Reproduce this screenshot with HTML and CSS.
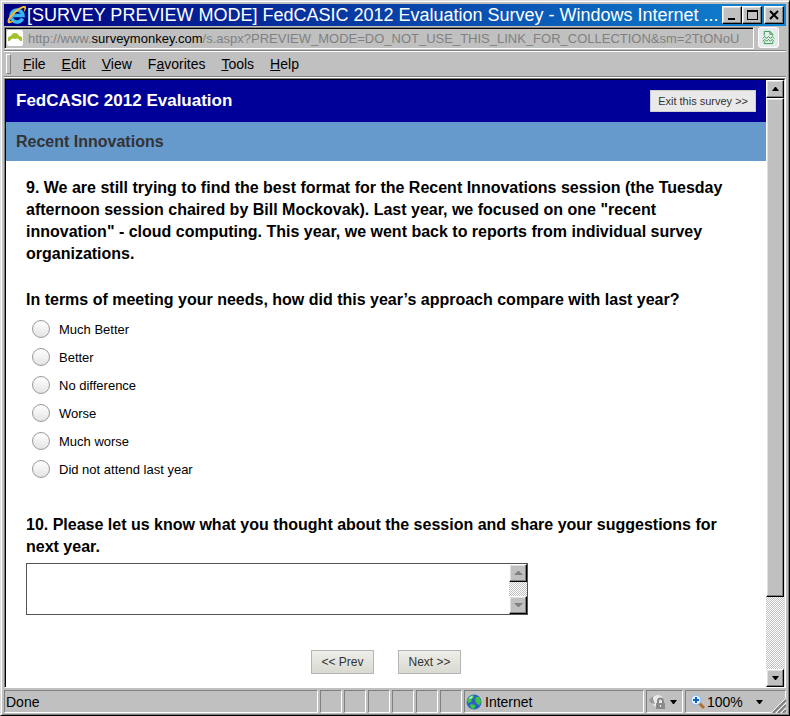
FILE: index.html
```html
<!DOCTYPE html>
<html lang="en">

<head>
    <meta charset="UTF-8">
    <meta name="viewport" content="width=device-width, initial-scale=1.0">
    <title>FedCASIC 2012 Evaluation Survey</title>
    <link rel="stylesheet" href="styles.css">
</head>

<body>
    <div class="window">
        <header class="title-bar">
            <svg class="ie-icon" viewBox="0 0 20 20" aria-hidden="true">
                <path d="M15.500 13.500A6 6 0 1 1 16 10.500H6" fill="none" stroke="#35b5f2" stroke-width="3.500" />
                <path d="M1 18C-2 13 12 0 18 1c2 1 1 4-1 6 0-2 1-4 0-4C12 3 1 15 3 16c2 1 4-1 5-1-2 2-5 4-7 3z"
                    fill="#f5bd2c" />
            </svg>
            <h1 class="window-title">[SURVEY PREVIEW MODE] FedCASIC 2012 Evaluation Survey - Windows Internet ...</h1>
            <div class="window-buttons">
                <button type="button" class="window-button" aria-label="Minimize">
                    <svg viewBox="0 0 12 12"><path d="M2 9h7v2H2z" /></svg>
                </button>
                <button type="button" class="window-button" aria-label="Maximize">
                    <svg viewBox="0 0 12 12"><path d="M1 1h11v10H1zM2 3v7h9V3z" fill-rule="evenodd" /></svg>
                </button>
                <button type="button" class="window-button close-button" aria-label="Close">
                    <svg viewBox="0 0 12 12"><path d="M2 2l8 8M10 2l-8 8" stroke="#000" stroke-width="2" /></svg>
                </button>
            </div>
        </header>

        <div class="address-bar">
            <div class="address-field">
                <svg class="site-icon" viewBox="0 0 16 16" aria-hidden="true">
                    <rect width="16" height="16" rx="2" fill="#fff" />
                    <path d="M1 11V8c0-1 1-2 3-2 1-4 7-4 8 0 2 0 3 1 3 2v3h-2c0-1-1-2-2-2-1-1-2 0-3 0s-2-1-3 0c-1 0-2 1-2 2z"
                        fill="#a3c12d" />
                </svg>
                <p class="address-text">http://www.<span class="domain">surveymonkey.com</span>/s.aspx?PREVIEW_MODE=DO_NOT_USE_THIS_LINK_FOR_COLLECTION&amp;sm=2TtONoU</p>
            </div>
            <button type="button" class="compat-button" aria-label="Compatibility View">
                <svg viewBox="0 0 14 16" fill="none" stroke="#279b3e" stroke-width="1">
                    <path d="M2.500 6V1.500h6l3 3V6M8.500 1.500v3h3M2.500 12v2.500h9V12" />
                    <path d="M1 9l2-2 2 2 2-2 2 2 2-2 2 2M1 12l2-2 2 2 2-2 2 2 2-2 2 2" />
                </svg>
            </button>
        </div>

        <nav class="menu-bar">
            <button type="button" class="menu-item"><u>F</u>ile</button>
            <button type="button" class="menu-item"><u>E</u>dit</button>
            <button type="button" class="menu-item"><u>V</u>iew</button>
            <button type="button" class="menu-item">F<u>a</u>vorites</button>
            <button type="button" class="menu-item"><u>T</u>ools</button>
            <button type="button" class="menu-item"><u>H</u>elp</button>
        </nav>

        <div class="viewport">
            <main class="page">
                <div class="survey-header">
                    <h2>FedCASIC 2012 Evaluation</h2>
                    <button type="button" class="exit-button">Exit this survey &gt;&gt;</button>
                </div>
                <h3 class="page-title">Recent Innovations</h3>

                <form class="survey-form">
                    <fieldset class="question">
                        <legend>
                            <span class="paragraph">9. We are still trying to find the best format for the Recent
                                Innovations session (the Tuesday afternoon session chaired by Bill Mockovak). Last
                                year, we focused on one "recent innovation" - cloud computing. This year, we went back
                                to reports from individual survey organizations.</span>
                            <span class="paragraph">In terms of meeting your needs, how did this year’s approach
                                compare with last year?</span>
                        </legend>
                        <label class="choice"><input type="radio" name="q9"> Much Better</label>
                        <label class="choice"><input type="radio" name="q9"> Better</label>
                        <label class="choice"><input type="radio" name="q9"> No difference</label>
                        <label class="choice"><input type="radio" name="q9"> Worse</label>
                        <label class="choice"><input type="radio" name="q9"> Much worse</label>
                        <label class="choice"><input type="radio" name="q9"> Did not attend last year</label>
                    </fieldset>

                    <div class="question">
                        <label class="question-text" for="suggestions">10. Please let us know what you thought about
                            the session and share your suggestions for next year.</label>
                        <div class="comment-box">
                            <textarea id="suggestions"></textarea>
                            <div class="scrollbar disabled" aria-hidden="true">
                                <span class="scroll-button"><svg viewBox="0 0 9 6"><path d="M4 1h1l4 4H0z" /></svg></span>
                                <span class="scroll-button"><svg viewBox="0 0 9 6"><path d="M0 1h9L5 5H4z" /></svg></span>
                            </div>
                        </div>
                    </div>

                    <div class="nav-buttons">
                        <button type="button">&lt;&lt; Prev</button>
                        <button type="button">Next &gt;&gt;</button>
                    </div>
                </form>
            </main>

            <div class="scrollbar" aria-hidden="true">
                <span class="scroll-button"><svg viewBox="0 0 9 6"><path d="M4 1h1l3 4H1z" /></svg></span>
                <span class="scroll-thumb"></span>
                <span class="scroll-track"></span>
                <span class="scroll-button"><svg viewBox="0 0 9 6"><path d="M1 1h7L5 5H4z" /></svg></span>
            </div>
        </div>

        <footer class="status-bar">
            <span class="status-cell status-text">Done</span>
            <span class="status-cell"></span>
            <span class="status-cell"></span>
            <span class="status-cell"></span>
            <span class="status-cell"></span>
            <span class="status-cell"></span>
            <span class="status-cell"></span>
            <span class="status-cell zone-cell">
                <svg class="status-icon" viewBox="0 0 16 16" aria-hidden="true">
                    <circle cx="8" cy="8" r="7.500" fill="#2c62c4" />
                    <path d="M1 6l3-4 3-1 1 2-2 2-1 3-3 1zM10 3l3 0 2 4-1 4-3-1-2-4zM5 10l4 1 0 3-3 1-2-3z" fill="#3fc541" />
                    <path d="M3 4l3-2 1 1-3 2z" fill="#c6f0f5" />
                </svg>
                Internet
            </span>
            <span class="status-cell protect-cell">
                <svg class="status-icon" viewBox="0 0 16 16" aria-hidden="true">
                    <circle cx="9" cy="7" r="6" fill="#e9e9e9" />
                    <path d="M0 6l4-4v3l2 5-4-1z" fill="#999" />
                    <path d="M9 9V7a2 2 0 0 1 5 0v2" fill="none" stroke="#888" stroke-width="2" />
                    <path d="M7 9h9v6H7z" fill="#8b8b8b" />
                    <path d="M11 11h1v2h-1z" fill="#eee" />
                </svg>
                <svg class="arrow" viewBox="0 0 7 4"><path d="M0 0h7L4 4H3z" /></svg>
            </span>
            <span class="status-cell zoom-cell">
                <svg class="status-icon" viewBox="0 0 16 16" aria-hidden="true">
                    <path d="M9 9l5 5" stroke="#b86d32" stroke-width="3" />
                    <circle cx="6" cy="6" r="5" fill="#dff0ff" stroke="#8fb4e0" />
                    <path d="M5 3h2v2h2v2H7v2H5V7H3V5h2z" fill="#125fc4" />
                </svg>
                100%
                <svg class="arrow" viewBox="0 0 7 4"><path d="M0 0h7L4 4H3z" /></svg>
            </span>
            <svg class="size-grip" viewBox="0 0 16 16" aria-hidden="true">
                <path d="M0 16L16 0v16z" fill="#c0c0c0" />
                <path d="M1 16L16 1M6 16L16 6M11 16l5-5" stroke="#fff" />
                <path d="M3 16L16 3M8 16l8-8M13 16l3-3" stroke="#808080" stroke-width="2" />
            </svg>
        </footer>
    </div>
</body>

</html>
```
FILE: styles.css
```css
* {
    box-sizing: border-box;
}

body {
    margin: 0;
    background: #c0c0c0;
    font-family: "Liberation Sans", Arial, sans-serif;
    font-size: 13px;
    color: #000;
}

button {
    font-family: inherit;
    color: inherit;
    padding: 0;
}

.window {
    min-height: 100vh;
    display: flex;
    flex-direction: column;
    padding: 3px 3px 2px;
    background: #c0c0c0;
    border: 1px solid #dfdfdf;
    border-right-color: #000;
    border-bottom-color: #000;
    box-shadow: inset 1px 1px #fff, inset -1px -1px #808080;
}

/* Title bar */
.title-bar {
    display: flex;
    align-items: center;
    height: 22px;
    padding: 0 2px 0 3px;
    background: linear-gradient(to right, #000080, #1084d0);
    color: #fff;
}

.ie-icon {
    width: 20px;
    height: 20px;
}

.window-title {
    flex: 1;
    margin: 0;
    font-size: 18px;
    font-weight: normal;
    line-height: 22px;
    white-space: nowrap;
    overflow: hidden;
}

.window-buttons {
    display: flex;
}

.window-button,
.scroll-button,
.scroll-thumb {
    background: #c0c0c0;
    border: 1px solid;
    border-color: #fff #000 #000 #fff;
    box-shadow: inset -1px -1px #808080, inset 1px 1px #dfdfdf;
}

.window-button {
    display: flex;
    width: 20px;
    height: 18px;
    padding: 2px 3px;
}

.window-button svg {
    width: 12px;
    height: 12px;
}

.close-button {
    margin-left: 2px;
}

/* Address bar */
.address-bar {
    display: flex;
    height: 24px;
    margin-top: 1px;
    padding-right: 7px;
    gap: 4px;
    border-bottom: 1px solid #808080;
}

.address-field {
    flex: 1;
    min-width: 0;
    display: flex;
    align-items: center;
    height: 22px;
    padding-left: 2px;
    gap: 5px;
    border: 1px solid;
    border-color: #808080 #fff #fff #808080;
    box-shadow: inset 1px 1px #000;
}

.site-icon {
    flex: none;
    width: 16px;
    height: 16px;
}

.address-text {
    margin: 0;
    font-size: 13px;
    color: #808080;
    white-space: nowrap;
    overflow: hidden;
}

.domain {
    color: #000;
}

.compat-button {
    width: 21px;
    height: 21px;
    padding: 2px;
    background: #e8ebee;
    border: 1px solid #fff;
    border-radius: 3px;
}

.compat-button svg {
    display: block;
    width: 15px;
    height: 15px;
}

/* Menu bar */
.menu-bar {
    display: flex;
    align-items: center;
    height: 26px;
    margin-bottom: 1px;
    gap: 16px;
    padding-left: 2px;
    border-top: 1px solid #fff;
    border-bottom: 1px solid #808080;
    box-shadow: 0 1px #fff;
}

/* Toolbar grip */
.menu-bar::before {
    content: "";
    width: 3px;
    height: 18px;
    margin-right: -4px;
    border: 1px solid;
    border-color: #fff #808080 #808080 #fff;
}

.menu-item {
    border: 0;
    background: none;
    font-size: 14px;
}

/* Page area */
.viewport {
    flex: 1;
    display: flex;
    border: 1px solid;
    border-color: #808080 #fff #fff #808080;
    background: #fff;
}

.viewport::before {
    content: "";
    width: 1px;
    background: #000;
}

.page {
    flex: 1;
    min-width: 0;
    border-top: 1px solid #000;
}

.survey-header {
    display: flex;
    align-items: center;
    justify-content: space-between;
    height: 42px;
    padding: 0 10px;
    background: #000099;
    color: #fff;
}

.survey-header h2 {
    margin: 0;
    font-size: 17px;
}

.exit-button {
    height: 22px;
    padding: 0 7px;
    border: 1px solid #ccc;
    background: #e9e9e9;
    color: #333;
    font-size: 11px;
}

.page-title {
    margin: 0;
    padding: 0 10px;
    background: #6699cc;
    color: #333;
    font-size: 16px;
    line-height: 39px;
}

.survey-form {
    padding: 16px 20px 10px;
}

.question {
    margin: 0 0 31px;
    padding: 0;
    border: 0;
}

.question legend,
.question-text {
    display: block;
    padding: 0;
    max-width: 700px;
    font-size: 16px;
    font-weight: bold;
    line-height: 22px;
}

.question legend {
    margin-bottom: 4px;
}

.paragraph {
    display: block;
}

.paragraph + .paragraph {
    margin-top: 24px;
}

.choice {
    display: flex;
    align-items: center;
    gap: 9px;
    height: 28px;
    padding-left: 6px;
}

.choice input {
    appearance: none;
    width: 18px;
    height: 18px;
    margin: 0;
    border: 1px solid #999;
    border-radius: 50%;
    background: linear-gradient(#fff, #e4e4e4);
}

.comment-box {
    display: flex;
    width: 502px;
    max-width: 100%;
    height: 52px;
    margin-top: 5px;
    border: 1px solid #555;
}

.comment-box textarea {
    flex: 1;
    min-width: 0;
    border: 0;
    resize: none;
    outline: none;
}

.nav-buttons {
    display: flex;
    justify-content: center;
    gap: 24px;
    margin-top: 35px;
}

.nav-buttons button {
    width: 63px;
    height: 24px;
    border: 1px solid #b5b5b5;
    background: linear-gradient(#eeeeea, #d8d9d0);
    color: #333;
    font-size: 12px;
}

/* Scrollbars */
.scrollbar {
    display: flex;
    flex-direction: column;
    justify-content: space-between;
    width: 18px;
    background: repeating-conic-gradient(#c0c0c0 0 25%, #fff 0 50%) 0 0 / 2px 2px;
}

.viewport > .scrollbar {
    width: 19px;
    border-top: 1px solid #000;
    border-right: 1px solid #dfdfdf;
}

.scroll-button {
    display: flex;
    align-items: center;
    justify-content: center;
    height: 18px;
}

.scroll-button svg {
    width: 9px;
    height: 6px;
}

.scroll-thumb {
    flex: 499;
}

.scroll-track {
    flex: 72;
}

.disabled path {
    fill: #808080;
}

/* Status bar */
.status-bar {
    position: relative;
    display: flex;
    gap: 2px;
    height: 23px;
    margin-top: 2px;
}

.status-cell {
    display: flex;
    align-items: center;
    width: 22px;
    border: 1px solid;
    border-color: #808080 #fff #fff #808080;
    font-size: 14px;
}

.status-text {
    flex: 1;
    padding-left: 1px;
}

.zone-cell {
    width: 180px;
    gap: 3px;
    padding-left: 1px;
}

.protect-cell {
    width: 37px;
    gap: 5px;
    padding-left: 2px;
}

.zoom-cell {
    width: 101px;
    gap: 1px;
    padding-left: 4px;
}

.zoom-cell .arrow {
    margin-left: 12px;
}

.status-icon {
    width: 16px;
    height: 16px;
}

.arrow {
    width: 7px;
    height: 4px;
}

.size-grip {
    position: absolute;
    right: 0;
    bottom: 0;
    width: 16px;
    height: 16px;
}
```
